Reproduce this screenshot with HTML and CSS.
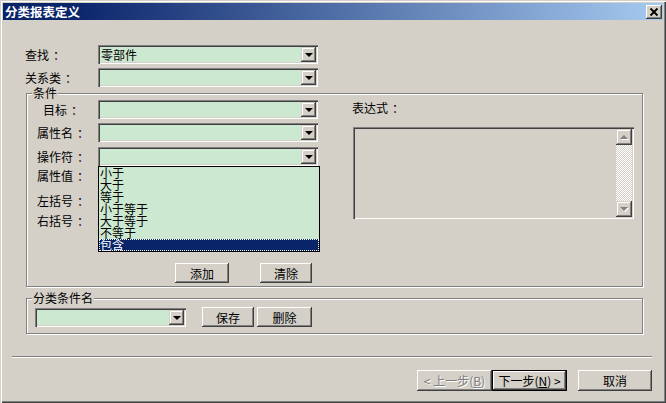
FILE: index.html
```html
<!DOCTYPE html>
<html lang="zh-CN">
<head>
    <meta charset="UTF-8">
    <title>分类报表定义</title>
    <link rel="stylesheet" href="styles.css">
</head>
<body>
    <div class="window">
        <div class="titlebar">
            <span class="title">分类报表定义</span>
            <span class="close-btn">
                <svg width="16" height="14" viewBox="0 0 16 14">
                    <path d="M4.5 3.5 L11.5 10.5 M11.5 3.5 L4.5 10.5" stroke="#000" stroke-width="1.8" fill="none"/>
                </svg>
            </span>
        </div>

        <div class="top-row first">
            <label class="lbl">查找<span class="colon">：</span></label>
            <div class="combo"><span class="combo-text">零部件</span><span class="drop-btn"></span></div>
        </div>
        <div class="top-row second">
            <label class="lbl">关系类<span class="colon">：</span></label>
            <div class="combo"><span class="combo-text"></span><span class="drop-btn"></span></div>
        </div>

        <div class="group cond">
            <span class="legend">条件</span>
            <div class="cond-left">
                <div class="row r-target">
                    <label class="lbl indent">目标<span class="colon">：</span></label>
                    <div class="combo"><span class="combo-text"></span><span class="drop-btn"></span></div>
                </div>
                <div class="row r-attr">
                    <label class="lbl">属性名<span class="colon">：</span></label>
                    <div class="combo"><span class="combo-text"></span><span class="drop-btn"></span></div>
                </div>
                <div class="row r-op">
                    <label class="lbl">操作符<span class="colon">：</span></label>
                    <div class="combo open">
                        <span class="combo-text"></span><span class="drop-btn"></span>
                        <ul class="droplist">
                            <li>小于</li>
                            <li>大于</li>
                            <li>等于</li>
                            <li>小于等于</li>
                            <li>大于等于</li>
                            <li>不等于</li>
                            <li class="selected">包含</li>
                        </ul>
                    </div>
                </div>
                <div class="row r-val"><label class="lbl">属性值<span class="colon">：</span></label></div>
                <div class="row r-lp"><label class="lbl">左括号<span class="colon">：</span></label></div>
                <div class="row r-rp"><label class="lbl">右括号<span class="colon">：</span></label></div>
                <div class="btn-row">
                    <button class="btn add">添加</button>
                    <button class="btn clear">清除</button>
                </div>
            </div>
            <div class="cond-right">
                <div class="expr-label">表达式<span class="colon">：</span></div>
                <div class="textarea">
                    <div class="vscroll">
                        <span class="sb-btn up"></span>
                        <span class="sb-track"></span>
                        <span class="sb-btn down"></span>
                    </div>
                </div>
            </div>
        </div>

        <div class="group save-group">
            <span class="legend">分类条件名</span>
            <div class="combo name-combo"><span class="combo-text"></span><span class="drop-btn"></span></div>
            <button class="btn save">保存</button>
            <button class="btn del">删除</button>
        </div>

        <div class="separator"></div>

        <div class="footer">
            <button class="btn wide" disabled>&lt; 上一步(<u>B</u>)</button>
            <button class="btn wide default">下一步(<u>N</u>) &gt;</button>
            <button class="btn wide cancel">取消</button>
        </div>
    </div>
</body>
</html>
```

FILE: styles.css
```css
* {
    margin: 0;
    padding: 0;
    box-sizing: border-box;
}

body {
    background: #d4d0c8;
    font-family: "Noto Sans CJK SC", "Liberation Sans", sans-serif;
    font-size: 12px;
    color: #000;
}

.window {
    width: 666px;
    height: 403px;
    padding: 3px;
    background: #d4d0c8;
    box-shadow: inset 1px 1px #d4d0c8, inset 2px 2px #fff,
                inset -1px -1px #404040, inset -2px -2px #808080;
}

.titlebar {
    height: 17px;
    display: flex;
    align-items: center;
    justify-content: space-between;
    background: linear-gradient(90deg, #0a246a 10%, #a6caf0);
}

.title {
    color: #fff;
    font-weight: bold;
    font-size: 12.5px;
    padding-left: 2px;
    line-height: 17px;
}

.close-btn {
    width: 16px;
    height: 14px;
    margin-right: 1px;
    background: #d4d0c8;
    box-shadow: inset -1px -1px #404040, inset 1px 1px #fff,
                inset -2px -2px #808080;
    display: flex;
}

/* rows */
.top-row {
    display: flex;
    align-items: center;
    height: 19px;
    margin-left: 22px;
}

.top-row .lbl {
    width: 73px;
}

.first {
    margin-top: 25px;
}

.second {
    margin-top: 4px;
}

.lbl {
    line-height: 19px;
    white-space: nowrap;
}

.colon {
    padding-left: 4px;
}

/* combo box */
.combo {
    position: relative;
    width: 220px;
    height: 19px;
    padding: 2px;
    display: flex;
    background: #cde8d0;
    box-shadow: inset 1px 1px #808080, inset 2px 2px #404040,
                inset -1px -1px #fff, inset -2px -2px #d4d0c8;
}

.combo-text {
    flex: 1;
    padding-left: 1px;
    line-height: 15px;
}

.drop-btn {
    width: 15px;
    height: 15px;
    background: #d4d0c8;
    box-shadow: inset -1px -1px #404040, inset 1px 1px #d4d0c8,
                inset -2px -2px #808080, inset 2px 2px #fff;
    display: flex;
    align-items: center;
    justify-content: center;
}

.drop-btn::after {
    content: '';
    border-left: 4px solid transparent;
    border-right: 4px solid transparent;
    border-top: 4px solid #000;
    margin-top: 1px;
}

.droplist {
    position: absolute;
    top: 100%;
    left: 0;
    width: 222px;
    list-style: none;
    background: #cde8d0;
    border: 1px solid #000;
    z-index: 5;
}

.droplist li {
    line-height: 12px;
    height: 12px;
    padding-left: 1px;
}

.droplist .selected {
    background: #0a246a;
    color: #fff;
    outline: 1px dotted #fff;
    outline-offset: -1px;
}

/* group boxes */
.group {
    position: relative;
    margin-left: 23px;
    width: 617px;
    border: 1px solid #808080;
    box-shadow: inset 1px 1px #fff, 1px 1px #fff;
}

.legend {
    position: absolute;
    top: -8px;
    left: 5px;
    padding: 0 1px;
    line-height: 14px;
    background: #d4d0c8;
}

.cond {
    margin-top: 6px;
    height: 194px;
    display: flex;
}

.cond-left {
    width: 291px;
    padding-top: 6px;
}

.row {
    display: flex;
    align-items: center;
    height: 19px;
}

.row .lbl {
    width: 71px;
    padding-left: 10px;
}

.row .lbl.indent {
    padding-left: 16px;
}

.r-attr {
    margin-top: 4px;
}

.r-op {
    margin-top: 5px;
}

.r-lp {
    margin-top: 6px;
}

.r-rp {
    margin-top: 1px;
}

.btn-row {
    display: flex;
    margin-top: 33px;
    margin-left: 148px;
}

/* buttons */
.btn {
    height: 20px;
    border: none;
    background: #d4d0c8;
    font-family: inherit;
    font-size: 12px;
    color: #000;
    box-shadow: inset -1px -1px #404040, inset 1px 1px #fff,
                inset -2px -2px #808080, inset 2px 2px #d4d0c8;
}

.add {
    width: 54px;
}

.clear {
    width: 52px;
    margin-left: 31px;
}

.cond-right {
    margin-left: 34px;
    padding-top: 7px;
}

.expr-label {
    line-height: 14px;
}

.textarea {
    margin-top: 12px;
    margin-left: 1px;
    width: 281px;
    height: 92px;
    padding: 2px;
    display: flex;
    justify-content: flex-end;
    background: #d4d0c8;
    box-shadow: inset 1px 1px #808080, inset 2px 2px #404040,
                inset -1px -1px #fff, inset -2px -2px #d4d0c8;
}

.vscroll {
    width: 16px;
    display: flex;
    flex-direction: column;
}

.sb-btn {
    height: 16px;
    background: #d4d0c8;
    box-shadow: inset -1px -1px #404040, inset 1px 1px #d4d0c8,
                inset -2px -2px #808080, inset 2px 2px #fff;
    display: flex;
    align-items: center;
    justify-content: center;
}

.sb-btn.up::after {
    content: '';
    border-left: 4px solid transparent;
    border-right: 4px solid transparent;
    border-bottom: 4px solid #808080;
    filter: drop-shadow(1px 1px 0 #fff);
}

.sb-btn.down::after {
    content: '';
    border-left: 4px solid transparent;
    border-right: 4px solid transparent;
    border-top: 4px solid #808080;
    filter: drop-shadow(1px 1px 0 #fff);
}

.sb-track {
    flex: 1;
    background: repeating-conic-gradient(#fff 0 25%, #d4d0c8 0 50%) 0 0 / 2px 2px;
}

/* save group */
.save-group {
    margin-top: 11px;
    height: 36px;
    display: flex;
    align-items: flex-start;
    padding: 8px 0 0 8px;
}

.name-combo {
    width: 151px;
    margin-top: 1px;
}

.save {
    width: 52px;
    margin-left: 16px;
}

.del {
    width: 55px;
    margin-left: 3px;
}

.separator {
    margin: 22px 0 0 9px;
    width: 640px;
    border-top: 1px solid #808080;
    border-bottom: 1px solid #fff;
}

.footer {
    display: flex;
    justify-content: flex-end;
    margin-top: 12px;
    padding-right: 11px;
}

.wide {
    width: 75px;
    height: 21px;
}

.btn:disabled {
    color: #808080;
    text-shadow: 1px 1px #fff;
}

.default {
    border: 1px solid #000;
    box-shadow: inset -1px -1px #404040, inset 1px 1px #fff,
                inset -2px -2px #808080;
}

.cancel {
    width: 74px;
    margin-left: 11px;
}
```
